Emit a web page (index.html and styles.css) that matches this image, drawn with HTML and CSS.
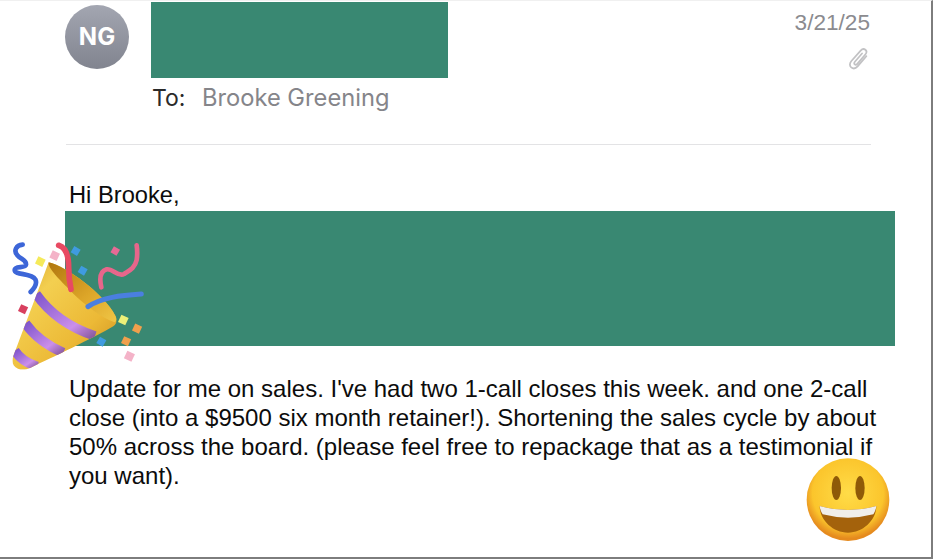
FILE: index.html
```html
<!DOCTYPE html>
<html lang="en">
<head>
<meta charset="utf-8">
<title>Mail</title>
<link rel="stylesheet" href="styles.css">
</head>
<body>
<main class="window">
  <header class="head">
    <div class="avatar">NG</div>
    <div class="people">
      <div class="redact-name"></div>
      <div class="to"><span class="to-label">To:</span><span class="to-name">Brooke Greening</span></div>
    </div>
    <div class="meta">
      <div class="date">3/21/25</div>
      <svg class="clip" viewBox="0 0 24 26" aria-hidden="true">
        <path d="M20 10 10.500 21c-2.200 2.500-5 2.800-7 1.200-2-1.700-1.900-4.600.2-7L13.800 3.800c1.600-1.800 3.700-2.100 5.200-.9 1.500 1.300 1.400 3.400-.1 5.200l-8.800 10.200c-.9 1-2 1.200-2.800.6-.8-.7-.7-1.900.2-2.900l7.800-9" />
      </svg>
    </div>
  </header>
  <div class="rule"></div>
  <section class="body">
    <p class="hi">Hi Brooke,</p>
    <div class="redact-block"></div>
    <p class="msg">Update for me on sales. I've had two 1-call closes this week. and one 2-call close (into a $9500 six month retainer!). Shortening the sales cycle by about 50% across the board. (please feel free to repackage that as a testimonial if you want).</p>
  </section>

  <svg class="popper" viewBox="0 0 480 450" aria-hidden="true">
    <defs>
      <linearGradient id="gold" x1="0" y1="0" x2="1" y2="1">
        <stop offset="0" stop-color="#d39a22"/>
        <stop offset=".3" stop-color="#f3cf50"/>
        <stop offset=".65" stop-color="#ecb936"/>
        <stop offset="1" stop-color="#c4851a"/>
      </linearGradient>
      <linearGradient id="inner" x1="0" y1="0" x2="1" y2="1">
        <stop offset="0" stop-color="#b0760f"/>
        <stop offset=".55" stop-color="#dca528"/>
        <stop offset="1" stop-color="#f0c646"/>
      </linearGradient>
      <linearGradient id="stripe" x1="0" y1="0" x2="1" y2="1">
        <stop offset="0" stop-color="#7f55cc"/>
        <stop offset=".7" stop-color="#cb8fea"/>
        <stop offset="1" stop-color="#8a5aa0"/>
      </linearGradient>
      <clipPath id="cone"><path d="M146 97C134 130 70 300 40 378c-6 18-2 32 14 38 12 5 24 3 38-3 60-28 190-90 248-124 12-8 12-22 6-32C310 190 200 110 146 97Z"/></clipPath>
    </defs>
    <path class="st st-blue" d="M68 44C48 46 40 62 52 76c10 12 28 14 26 28-2 12-34 2-34 16 0 16 50 8 62 28 6 12-2 26-14 38"/>
    <rect class="bit yellow" x="109" y="83" width="24" height="24" transform="rotate(25 121 95)"/>
    <rect class="bit pink" x="152" y="65" width="24" height="24" transform="rotate(25 164 77)"/>
    <rect class="bit blue" x="216" y="52" width="22" height="22" transform="rotate(30 227 63)"/>
    <rect class="bit blue" x="237" y="111" width="22" height="22" transform="rotate(30 248 122)"/>
    <rect class="bit rose" x="335" y="52" width="21" height="21" transform="rotate(30 345 63)"/>
    <rect class="bit red" x="58" y="226" width="23" height="23" transform="rotate(25 69 237)"/>
    <path class="st st-pink" d="M304 172c-6-26-4-48 16-54 18-3 34 24 52 14 14-10 32-16 38-42 2-14 2-30 0-44"/>
    <g clip-path="url(#cone)">
      <rect x="20" y="80" width="350" height="350" fill="url(#gold)"/>
      <path class="stripe" d="M108 192Q170 280 285 318"/>
      <path class="stripe" d="M76 280Q115 335 190 368"/>
      <path class="stripe" d="M44 362Q65 395 112 410"/>
    </g>
    <path fill="url(#inner)" d="M146 97c54 13 164 93 200 160 4 8 4 16-2 20-40-14-90-52-130-92-36-36-72-72-68-88Z"/>
    <path class="st st-red" d="M176 46c20 6 30 32 30 66 0 24 2 44 7 66"/>
    <path class="st st-pale" d="M264 230c40-28 100-34 160-38"/>
    <rect class="bit lime" x="358" y="258" width="24" height="24" transform="rotate(25 370 270)"/>
    <rect class="bit orange" x="400" y="284" width="23" height="23" transform="rotate(25 411 295)"/>
    <rect class="bit orange" x="367" y="322" width="23" height="23" transform="rotate(25 378 333)"/>
    <rect class="bit blue" x="293" y="324" width="22" height="22" transform="rotate(30 304 335)"/>
    <rect class="bit pink" x="376" y="366" width="25" height="25" transform="rotate(25 388 378)"/>
  </svg>

  <svg class="smile" viewBox="70 45 270 270" aria-hidden="true">
    <defs>
      <radialGradient id="face" cx=".5" cy=".42" r=".55">
        <stop offset="0" stop-color="#ffdc48"/>
        <stop offset=".78" stop-color="#fbc52c"/>
        <stop offset="1" stop-color="#e58a1e"/>
      </radialGradient>
    </defs>
    <circle cx="205" cy="179" r="124" fill="url(#face)"/>
    <ellipse class="eye" cx="170" cy="144" rx="14" ry="36"/>
    <ellipse class="eye" cx="241" cy="144" rx="14" ry="36"/>
    <path fill="#a4620c" d="M120 198Q205 222 290 198C290 240 250 278 205 278C160 278 120 240 120 198Z"/>
    <path fill="#f0eeea" d="M120 198Q205 222 290 198C289 208 285 216 281 223Q205 243 129 223C125 216 121 208 120 198Z"/>
  </svg>
</main>
</body>
</html>
```
FILE: styles.css
```css
* { box-sizing: border-box; }
html, body { margin: 0; padding: 0; background: #fff; }
.window {
  position: relative;
  width: 933px;
  height: 559px;
  overflow: hidden;
  background: #fff;
  border-top: 1px solid #f0f0f0;
  border-right: 2px solid #7d7d7d;
  border-bottom: 2px solid #7d7d7d;
  padding: 1px 0 0 65px;
  font-family: "Liberation Sans", Arial, sans-serif;
  color: #111;
}
.head { display: flex; align-items: flex-start; width: 806px; }
.avatar {
  width: 64px; height: 64px; margin-top: 3px; flex: none;
  border-radius: 50%;
  background: linear-gradient(#a3a6b1, #81848f);
  color: #fff;
  font: 700 24px/64px Inter, "Liberation Sans", sans-serif;
  text-align: center;
}
.people { margin-left: 22px; flex: 1; }
.redact-name { width: 297px; height: 76px; background: #398872; }
.to { display: flex; line-height: 28px; margin-top: 6px; padding-left: 1px; font-family: Inter, "Liberation Sans", sans-serif; }
.to-label { width: 50px; color: #2a2a2a; font-size: 23px; }
.to-name { color: #85858a; font-size: 23.700px; }
.meta { display: flex; flex-direction: column; align-items: flex-end; margin-right: 1px; }
.date { color: #8b8b8f; font-size: 22.600px; line-height: 26px; margin-top: 8px; }
.clip { width: 22px; height: 24px; margin-top: 11px; fill: none; stroke: #c2c2c4; stroke-width: 1.900; stroke-linecap: round; }
.rule { width: 805px; height: 1px; background: #e3e3e5; margin-top: 32px; margin-left: 1px; }
.body { margin-top: 36px; }
.hi, .msg { margin: 0; font-size: 24px; line-height: 29px; color: #0c0c0c; }
.hi { padding: 1px 0 0 4px; height: 29px; font-size: 23.700px; line-height: 27px; }
.redact-block { width: 830px; height: 135px; background: #398872; margin-top: 1px; }
.msg { width: 825px; padding-left: 4px; margin-top: 28px; }
.popper { position: absolute; left: 0; top: 229px; width: 160px; height: 150px; filter: blur(.35px); }
.smile { position: absolute; left: 803px; top: 454px; width: 90px; height: 90px; filter: blur(.3px); }
.eye { fill: #8f5a08; }
.bit.yellow { fill: #f5ea5a; }
.bit.pink { fill: #f4b3c8; }
.bit.blue { fill: #3f9be0; }
.bit.rose { fill: #e76a95; }
.bit.red { fill: #d8405f; }
.bit.lime { fill: #ecef78; }
.bit.orange { fill: #f0a04c; }
.st { fill: none; stroke-linecap: round; stroke-linejoin: round; }
.st-blue { stroke: #3d66d8; stroke-width: 14; }
.st-red { stroke: #e84a62; stroke-width: 17; }
.st-pink { stroke: #e7668b; stroke-width: 14; }
.st-pale { stroke: #4a7fe0; stroke-width: 15; }
.stripe { fill: none; stroke: url(#stripe); stroke-width: 29; }
```
